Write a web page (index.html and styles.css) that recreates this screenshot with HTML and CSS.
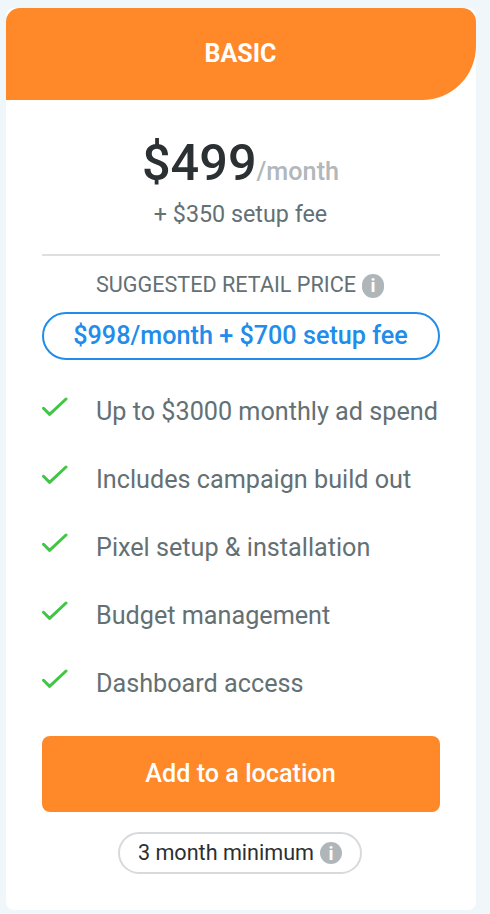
FILE: index.html
```html
<!DOCTYPE html>
<html lang="en">
<head>
    <meta charset="UTF-8">
    <meta name="viewport" content="width=device-width, initial-scale=1.0">
    <title>Pricing</title>
    <link rel="stylesheet" href="styles.css">
</head>
<body>
<div class="card">
    <div class="card-header">BASIC</div>
    <div class="card-body">
        <div class="price"><span class="amount">$499</span><span class="period">/month</span></div>
        <div class="setup-fee">+ $350 setup fee</div>
        <div class="divider"></div>
        <div class="retail-label">
            <span>SUGGESTED RETAIL PRICE</span>
            <span class="info info-tall">i</span>
        </div>
        <div class="retail-price">$998/month + $700 setup fee</div>
        <ul class="features">
            <li><svg class="check" viewBox="0 0 26 20"><path d="M1.5 11.3L7.6 17.4L24 2"/></svg><span>Up to $3000 monthly ad spend</span></li>
            <li><svg class="check" viewBox="0 0 26 20"><path d="M1.5 11.3L7.6 17.4L24 2"/></svg><span>Includes campaign build out</span></li>
            <li><svg class="check" viewBox="0 0 26 20"><path d="M1.5 11.3L7.6 17.4L24 2"/></svg><span>Pixel setup &amp; installation</span></li>
            <li><svg class="check" viewBox="0 0 26 20"><path d="M1.5 11.3L7.6 17.4L24 2"/></svg><span>Budget management</span></li>
            <li><svg class="check" viewBox="0 0 26 20"><path d="M1.5 11.3L7.6 17.4L24 2"/></svg><span>Dashboard access</span></li>
        </ul>
        <button class="add-button">Add to a location</button>
        <div class="minimum">
            <span>3 month minimum</span>
            <span class="info">i</span>
        </div>
    </div>
</div>
</body>
</html>
```
FILE: styles.css
```css
* {
    box-sizing: border-box;
}

body {
    background-color: #eff7fa;
    font-family: Roboto, Arial, sans-serif;
    color: #637074;
    margin: 0;
    padding: 8px 14px 4px 6px;
    height: 914px;
}

.card {
    background-color: #fff;
    border-radius: 8px;
    height: 902px;
}

.card-header {
    background-color: #ff8829;
    border-radius: 14px 14px 54px 0;
    color: #fff;
    font-size: 25px;
    font-weight: 700;
    height: 92px;
    line-height: 91px;
    padding-right: 1px;
    text-align: center;
}

.card-body {
    display: flex;
    flex-direction: column;
    padding: 31px 36px 0;
}

.price {
    height: 64px;
    line-height: 64px;
    padding-right: 1px;
    text-align: center;
}

.amount {
    color: #2b3033;
    font-size: 50.4px;
    font-weight: 500;
}

.period {
    color: #b1b7ba;
    font-size: 25.2px;
    font-weight: 500;
}

.setup-fee {
    font-size: 23.3px;
    line-height: 36px;
    margin-top: 1px;
    padding-right: 1px;
    text-align: center;
}

.divider {
    background-color: #dedfe0;
    height: 2px;
    margin: 22px 0 12px;
}

.retail-label {
    display: flex;
    align-items: center;
    justify-content: center;
    gap: 6px;
    font-size: 21.6px;
    height: 32px;
    padding-right: 2px;
}

.info {
    background-color: #afb6ba;
    border-radius: 11px;
    color: #fff;
    font-size: 19px;
    font-weight: 700;
    line-height: 23px;
    text-align: center;
    width: 22px;
    height: 22px;
}

.info-tall {
    height: 24px;
    line-height: 24px;
    margin-top: 3px;
}

.retail-price {
    border: 2px solid #218ce9;
    border-radius: 24px;
    color: #218ce9;
    font-size: 25.2px;
    font-weight: 500;
    height: 48px;
    line-height: 44px;
    margin-top: 12px;
    padding-right: 1px;
    text-align: center;
}

.features {
    list-style: none;
    margin: 17px 0 0;
    padding: 0;
}

.features li {
    display: flex;
    align-items: center;
    gap: 28px;
    font-size: 25.2px;
    height: 68px;
    white-space: nowrap;
}

.check {
    flex: none;
    width: 26px;
    height: 20px;
    margin-bottom: 8px;
    fill: none;
    stroke: #41c545;
    stroke-width: 3;
    stroke-linecap: round;
    stroke-linejoin: round;
}

.add-button {
    background-color: #ff8829;
    border: none;
    border-radius: 8px;
    color: #fff;
    font-family: inherit;
    font-size: 25.2px;
    font-weight: 500;
    height: 76px;
    margin-top: 19px;
    padding: 0 7px 1px 6px;
}

.minimum {
    display: flex;
    align-items: center;
    justify-content: center;
    gap: 6px;
    border: 2px solid #d7dadc;
    border-radius: 21px;
    color: #2b3033;
    font-size: 21.6px;
    line-height: 24px;
    height: 42px;
    width: 244px;
    margin: 20px 0 0 76px;
}
```
